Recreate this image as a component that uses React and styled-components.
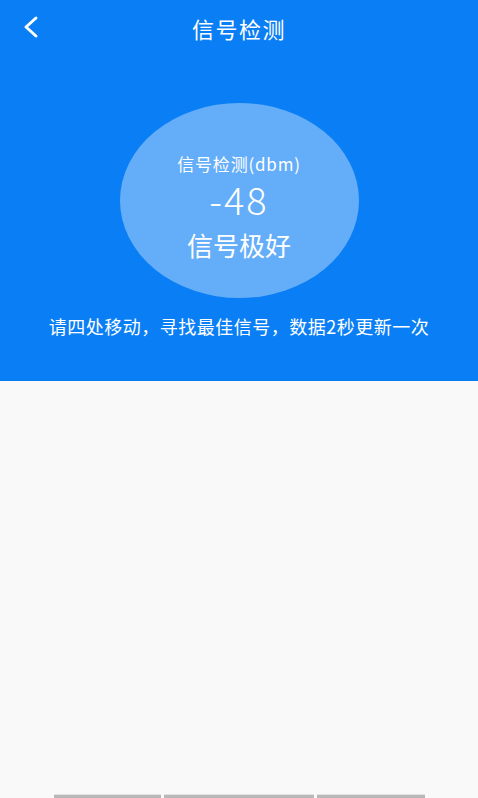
import React from "react";
import styled, { createGlobalStyle } from "styled-components";

const GlobalStyle = createGlobalStyle`
  html, body {
    margin: 0;
    padding: 0;
    background: #f9f9f9;
    font-family: "Noto Sans CJK SC", "Noto Sans", sans-serif;
  }
`;

function BackIcon() {
  return (
    <svg width="20" height="24" viewBox="0 0 20 24" fill="none">
      <path
        d="M15 3 L5 12 L15 21"
        stroke="#fff"
        strokeWidth="3"
        strokeLinecap="round"
        strokeLinejoin="round"
      />
    </svg>
  );
}

export default function App() {
  return (
    <>
      <GlobalStyle />
      <Page>
        <Top>
          <NavBar>
            <BackBtn>
              <BackIcon />
            </BackBtn>
            <Title>信号检测</Title>
          </NavBar>
          <Bubble>
            <Label>信号检测(dbm)</Label>
            <Value>-48</Value>
            <Level>信号极好</Level>
          </Bubble>
          <Hint>请四处移动，寻找最佳信号，数据2秒更新一次</Hint>
        </Top>
        <Body>
          <Tabs>
            <Tab $w={107} />
            <Tab $w={150} />
            <Tab $w={108} />
          </Tabs>
        </Body>
      </Page>
    </>
  );
}

const Page = styled.div`
  display: flex;
  flex-direction: column;
  height: 798px;
  overflow: hidden;
`;

const Top = styled.section`
  height: 381px;
  background: #0a7ef4;
  display: flex;
  flex-direction: column;
  align-items: center;
`;

const NavBar = styled.header`
  position: relative;
  width: 100%;
  height: 56px;
  display: flex;
  align-items: center;
  justify-content: center;
`;

const BackBtn = styled.button`
  position: absolute;
  left: 21px;
  top: 15px;
  background: transparent;
  border: none;
  padding: 0;
  display: flex;
`;

const Title = styled.h1`
  margin: 0;
  color: #fff;
  font-size: 22px;
  font-weight: 400;
  letter-spacing: 1.5px;
`;

const Bubble = styled.div`
  margin-top: 47px;
  width: 239px;
  height: 195px;
  border-radius: 50%;
  background: #64adf8;
  color: #fff;
  display: flex;
  flex-direction: column;
  align-items: center;
  justify-content: center;
`;

const Label = styled.div`
  font-size: 17px;
  line-height: 20px;
  letter-spacing: 0.8px;
  margin-top: 13px;
`;

const Value = styled.div`
  font-size: 38px;
  font-weight: 300;
  line-height: 40px;
  letter-spacing: 2px;
  margin-top: 5px;
`;

const Level = styled.div`
  font-size: 26px;
  line-height: 30px;
  margin-top: 11px;
`;

const Hint = styled.p`
  margin: 16px 0 0;
  color: #fff;
  font-size: 18px;
  line-height: 24px;
  letter-spacing: 0.5px;
`;

const Body = styled.main`
  flex: 1;
  display: flex;
  flex-direction: column;
  justify-content: flex-end;
`;

const Tabs = styled.div`
  display: flex;
  justify-content: center;
  gap: 3px;
`;

const Tab = styled.div`
  width: ${({ $w }) => $w}px;
  height: 3px;
  background: #b8b8b8;
  border-top: 1px solid #e2e2e2;
`;
